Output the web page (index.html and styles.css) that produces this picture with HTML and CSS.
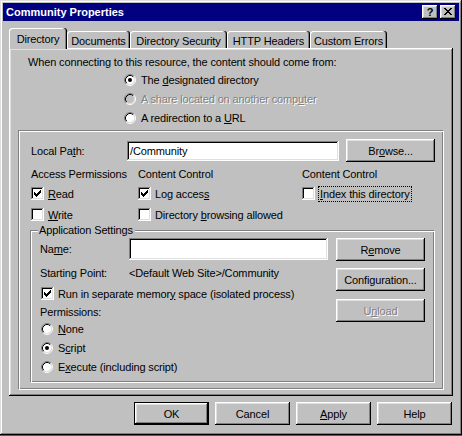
FILE: index.html
```html
<!DOCTYPE html>
<html>
<head>
<meta charset="utf-8">
<title>Community Properties</title>
<link rel="stylesheet" href="styles.css">
</head>
<body>
<svg class="defs" width="0" height="0" aria-hidden="true">
  <defs>
    <symbol id="radio-off" viewBox="0 0 12 12">
      <circle cx="6" cy="6" r="4.5" fill="#fff"/>
      <path d="M2.11 9.89A5.5 5.5 0 0 1 9.89 2.11" stroke="#808080" fill="none"/>
      <path d="M9.89 2.11A5.5 5.5 0 0 1 2.11 9.89" stroke="#fff" fill="none"/>
      <path d="M2.82 9.18A4.5 4.5 0 0 1 9.18 2.82" stroke="#000" fill="none"/>
      <path d="M9.18 2.82A4.5 4.5 0 0 1 2.82 9.18" stroke="#dfdfdf" fill="none"/>
    </symbol>
    <symbol id="radio-on" viewBox="0 0 12 12">
      <circle cx="6" cy="6" r="4.5" fill="#fff"/>
      <path d="M2.11 9.89A5.5 5.5 0 0 1 9.89 2.11" stroke="#808080" fill="none"/>
      <path d="M9.89 2.11A5.5 5.5 0 0 1 2.11 9.89" stroke="#fff" fill="none"/>
      <path d="M2.82 9.18A4.5 4.5 0 0 1 9.18 2.82" stroke="#000" fill="none"/>
      <path d="M9.18 2.82A4.5 4.5 0 0 1 2.82 9.18" stroke="#dfdfdf" fill="none"/>
      <circle cx="6" cy="6" r="2" fill="#000"/>
    </symbol>
    <symbol id="radio-dis" viewBox="0 0 12 12">
      <circle cx="6" cy="6" r="4.5" fill="#c0c0c0"/>
      <path d="M2.11 9.89A5.5 5.5 0 0 1 9.89 2.11" stroke="#808080" fill="none"/>
      <path d="M9.89 2.11A5.5 5.5 0 0 1 2.11 9.89" stroke="#fff" fill="none"/>
      <path d="M2.82 9.18A4.5 4.5 0 0 1 9.18 2.82" stroke="#000" fill="none"/>
      <path d="M9.18 2.82A4.5 4.5 0 0 1 2.82 9.18" stroke="#dfdfdf" fill="none"/>
    </symbol>
    <symbol id="check" viewBox="0 0 13 13">
      <path d="M3 5h1v1h1v1h1v-1h1v-1h1v-1h1v-1h1v3h-1v1h-1v1h-1v1h-1v1h-1v-1h-1v-1h-1v-3z" fill="#000"/>
    </symbol>
  </defs>
</svg>

<div class="window">
  <div class="titlebar">
    <span class="title">Community Properties</span>
    <span class="tbtn tbtn-help">?</span>
    <span class="tbtn tbtn-close">
      <svg width="16" height="14" viewBox="0 0 16 14" shape-rendering="crispEdges">
        <path fill="#000" d="M4 3h2v1h-2zM10 3h2v1h-2zM5 4h2v1h-2zM9 4h2v1h-2zM6 5h4v1h-4zM7 6h2v1h-2zM6 7h4v1h-4zM5 8h2v1h-2zM9 8h2v1h-2zM4 9h2v1h-2zM10 9h2v1h-2z"/>
      </svg>
    </span>
  </div>

  <div class="body">
    <div class="tabs">
      <div class="tab active tab-dir">Directory</div>
      <div class="tab tab-docs">Documents</div>
      <div class="tab tab-sec">Directory Security</div>
      <div class="tab tab-http">HTTP Headers</div>
      <div class="tab tab-err">Custom Errors</div>
    </div>

    <div class="panel">
      <p class="intro">When connecting to this resource, the content should come from:</p>
      <div class="sources">
        <div class="opt"><svg class="radio"><use href="#radio-on"/></svg><span class="lbl">The <u>d</u>esignated directory</span></div>
        <div class="opt disabled"><svg class="radio"><use href="#radio-dis"/></svg><span class="lbl">A share located on another comp<u>u</u>ter</span></div>
        <div class="opt"><svg class="radio"><use href="#radio-off"/></svg><span class="lbl">A redirection to a <u>U</u>RL</span></div>
      </div>

      <div class="box">
        <div class="pathrow">
          <span class="pathlabel">Local Pa<u>t</u>h:</span>
          <div class="field field-path">/Community</div>
          <div class="btn btn-browse">Br<u>o</u>wse...</div>
        </div>

        <div class="perms">
          <div class="col col-access">
            <div class="head">Access Permissions</div>
            <div class="chk"><span class="cbox"><svg><use href="#check"/></svg></span><span class="lbl"><u>R</u>ead</span></div>
            <div class="chk"><span class="cbox"></span><span class="lbl"><u>W</u>rite</span></div>
          </div>
          <div class="col col-content">
            <div class="head">Content Control</div>
            <div class="chk"><span class="cbox"><svg><use href="#check"/></svg></span><span class="lbl">Log acces<u>s</u></span></div>
            <div class="chk"><span class="cbox"></span><span class="lbl">Directory <u>b</u>rowsing allowed</span></div>
          </div>
          <div class="col col-index">
            <div class="head">Content Control</div>
            <div class="chk"><span class="cbox"></span><span class="lbl focus"><u>I</u>ndex this directory</span></div>
          </div>
        </div>

        <div class="group">
          <div class="legend">Application Settings</div>
          <div class="appcols">
            <div class="appleft">
              <div class="namerow">
                <span class="applabel">Na<u>m</u>e:</span>
                <div class="field field-name"></div>
              </div>
              <div class="startrow">
                <span class="applabel">Starting Point:</span>
                <span>&lt;Default Web Site&gt;/Community</span>
              </div>
              <div class="chk runrow"><span class="cbox"><svg><use href="#check"/></svg></span><span class="lbl">Run in separate memor<u>y</u> space (isolated process)</span></div>
              <div class="permlabel">Permissions:</div>
              <div class="opt appopt"><svg class="radio"><use href="#radio-off"/></svg><span class="lbl"><u>N</u>one</span></div>
              <div class="opt appopt"><svg class="radio"><use href="#radio-on"/></svg><span class="lbl">S<u>c</u>ript</span></div>
              <div class="opt appopt"><svg class="radio"><use href="#radio-off"/></svg><span class="lbl">E<u>x</u>ecute (including script)</span></div>
            </div>
            <div class="appright">
              <div class="btn btn-side">R<u>e</u>move</div>
              <div class="btn btn-side">Configuration...</div>
              <div class="btn btn-side disabled">U<u>n</u>load</div>
            </div>
          </div>
        </div>
      </div>
    </div>

    <div class="buttons">
      <div class="btn btn-dlg default">OK</div>
      <div class="btn btn-dlg">Cancel</div>
      <div class="btn btn-dlg"><u>A</u>pply</div>
      <div class="btn btn-dlg">Help</div>
    </div>
  </div>
</div>
</body>
</html>
```

FILE: styles.css
```css
* { box-sizing: border-box; }

html, body {
  margin: 0;
  padding: 0;
}

body {
  width: 462px;
  height: 436px;
  background: #008080;
  font-family: "Liberation Sans", Arial, sans-serif;
  font-size: 11px;
  letter-spacing: -0.14px;
  color: #000;
  overflow: hidden;
}

.defs {
  position: absolute;
  width: 0;
  height: 0;
  overflow: hidden;
}

u { text-decoration: underline; text-underline-offset: 1px; }

.window {
  width: 462px;
  height: 435px;
  padding: 3px;
  background: #c0c0c0;
  box-shadow: inset -1px -1px #000, inset 1px 1px #dfdfdf, inset -2px -2px #808080, inset 2px 2px #fff;
}

/* title bar */
.titlebar {
  height: 18px;
  background: #000080;
  display: flex;
  align-items: center;
  padding: 0 3px 0 3px;
}

.title {
  flex: 1;
  color: #fff;
  font-weight: bold;
  letter-spacing: 0;
  line-height: 14px;
}

.tbtn {
  width: 16px;
  height: 14px;
  background: #c0c0c0;
  box-shadow: inset -1px -1px #000, inset 1px 1px #fff, inset -2px -2px #808080, inset 2px 2px #dfdfdf;
  display: flex;
  align-items: center;
  justify-content: center;
  font-weight: bold;
  font-size: 11px;
  line-height: 12px;
}

.tbtn-help {
  margin-right: 2px;
  padding-bottom: 1px;
}

.tbtn-close svg { display: block; }

/* body */
.body {
  padding: 7px 6px 0 6px;
}

.tabs {
  height: 20px;
  display: flex;
  align-items: flex-end;
}

.tab {
  height: 17px;
  padding-top: 3px;
  line-height: 14px;
  text-align: center;
  background: #c0c0c0;
  border-radius: 3px 3px 0 0;
  box-shadow: inset -1px 0 #000, inset -2px 0 #808080, inset 1px 1px #fff;
}

.tab.active {
  height: 21px;
  padding-top: 4px;
  margin-bottom: -1px;
  position: relative;
  z-index: 1;
}

.tab-dir { width: 58px; }
.tab-docs { width: 63px; }
.tab-sec { width: 97px; }
.tab-http { width: 83px; }
.tab-err { width: 77px; }

.panel {
  height: 348px;
  padding: 7px 0 0 9px;
  background: #c0c0c0;
  box-shadow: inset -1px -1px #000, inset 1px 1px #fff, inset -2px -2px #808080, inset 2px 2px #dfdfdf;
}

.intro {
  margin: 0 0 0 10px;
  line-height: 14px;
}

.sources {
  margin: 1px 0 0 106px;
}

.opt {
  height: 19px;
  display: flex;
  align-items: center;
}

.radio {
  width: 12px;
  height: 12px;
  flex: none;
  display: block;
}

.opt .lbl { margin-left: 5px; }

.disabled {
  color: #808080;
  text-shadow: 1px 1px 0 #fff;
}

/* etched box */
.box {
  width: 426px;
  height: 260px;
  margin-top: 3px;
  border: 1px solid;
  border-color: #808080 #fff #fff #808080;
  box-shadow: inset 1px 1px #fff, inset -1px -1px #808080;
  padding: 8px 0 0 12px;
}

.pathrow {
  height: 23px;
  display: flex;
  align-items: center;
}

.pathlabel { width: 96px; }

.field {
  background: #fff;
  box-shadow: inset -1px -1px #fff, inset 1px 1px #808080, inset -2px -2px #dfdfdf, inset 2px 2px #000;
  padding: 3px 3px 0 3px;
  line-height: 14px;
}

.field-path {
  width: 212px;
  height: 20px;
}

.btn {
  height: 23px;
  display: flex;
  align-items: center;
  justify-content: center;
  background: #c0c0c0;
  box-shadow: inset -1px -1px #000, inset 1px 1px #fff, inset -2px -2px #808080, inset 2px 2px #dfdfdf;
}

.btn-browse {
  width: 89px;
  margin-left: 7px;
}

.perms {
  display: flex;
  margin-top: 5px;
}

.col-access { width: 107px; }
.col-content { width: 164px; }

.head {
  line-height: 14px;
  margin-bottom: 2px;
}

.chk {
  height: 21px;
  display: flex;
  align-items: center;
}

.cbox {
  width: 13px;
  height: 13px;
  flex: none;
  background: #fff;
  box-shadow: inset -1px -1px #fff, inset 1px 1px #808080, inset -2px -2px #dfdfdf, inset 2px 2px #000;
}

.cbox svg {
  display: block;
  width: 13px;
  height: 13px;
  shape-rendering: crispEdges;
}

.chk .lbl { margin-left: 4px; }

.chk .lbl.focus {
  margin-left: 3px;
  padding: 1px 1px 1px 1px;
  border: 1px dotted #000;
  line-height: 12px;
}

/* application settings group */
.group {
  width: 405px;
  height: 153px;
  margin: 5px 0 0 -1px;
  border: 1px solid;
  border-color: #808080 #fff #fff #808080;
  box-shadow: inset 1px 1px #fff, inset -1px -1px #808080;
}

.legend {
  display: table;
  margin: -8px 0 0 7px;
  padding: 0 2px 0 1px;
  line-height: 14px;
  background: #c0c0c0;
}

.appcols {
  display: flex;
  margin-top: 1px;
}

.appleft {
  width: 305px;
  padding-left: 9px;
}

.namerow {
  height: 22px;
  display: flex;
  align-items: center;
}

.applabel {
  width: 89px;
  flex: none;
}

.field-name {
  width: 199px;
  height: 22px;
}

.startrow {
  display: flex;
  margin-top: 6px;
  line-height: 14px;
}

.runrow {
  height: 15px;
  margin-top: 6px;
  padding-left: 1px;
}

.permlabel {
  margin-top: 4px;
  line-height: 14px;
}

.appopt { padding-left: 1px; }
.appopt .lbl { margin-left: 5px; }

.appright {
  display: flex;
  flex-direction: column;
  gap: 7px;
}

.btn-side { width: 89px; }

.btn-side + .btn-side + .btn-side { margin-top: 1px; }

/* dialog buttons */
.buttons {
  display: flex;
  justify-content: flex-end;
  gap: 6px;
  margin-top: 6px;
  padding-right: 1px;
}

.btn-dlg { width: 75px; }

.btn.default {
  box-shadow: inset -1px -1px #000, inset 1px 1px #000, inset -2px -2px #000, inset 2px 2px #fff, inset -3px -3px #808080, inset 3px 3px #dfdfdf;
}
```
